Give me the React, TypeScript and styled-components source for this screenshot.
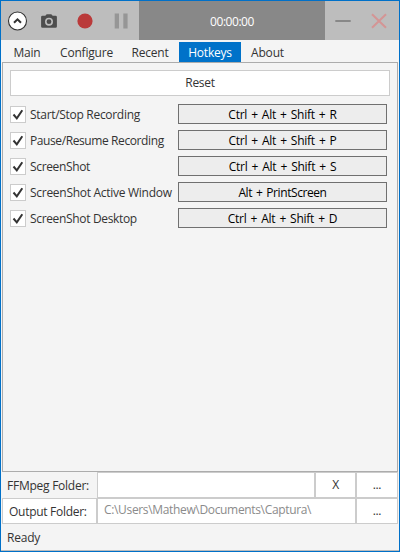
import React from "react";
import styled, { createGlobalStyle } from "styled-components";

const GlobalStyle = createGlobalStyle`
  * { box-sizing: border-box; }
  body { margin: 0; }
`;

const Window = styled.div`
  width: 400px;
  height: 552px;
  display: flex;
  flex-direction: column;
  border: 1px solid #0070c8;
  background: #f4f4f4;
  color: #333;
  font: 12px/16px "Open Sans", "Noto Sans", sans-serif;
  overflow: hidden;
`;

const Frame = styled.div`
  flex: 1;
  min-height: 0;
  display: flex;
  flex-direction: column;
  padding: 0 1px;
  border-bottom: 1px solid #bcbcbc;
`;

const TitleBar = styled.header`
  height: 39px;
  flex: none;
  display: flex;
  background: #bdbdbd;
  margin: 0 -1px;
  padding-left: 1px;
`;

const Tools = styled.div`
  width: 137px;
  svg { display: block; }
`;

const Timer = styled.div`
  width: 186px;
  display: flex;
  align-items: center;
  justify-content: center;
  padding: 2px 0 0 0;
  background: #888;
  color: #fff;
`;

const WindowButtons = styled.div`
  flex: 1;
  svg { display: block; }
`;

const Label = styled.span<{ $spacing?: number; $word?: number }>`
  white-space: pre;
  letter-spacing: ${(p) => p.$spacing ?? -0.2}px;
  word-spacing: ${(p) => p.$word ?? 0}px;
`;

const Tabs = styled.nav`
  height: 22px;
  flex: none;
  display: flex;
  padding-top: 2px;
`;

const Tab = styled.div<{ $width: number; $active?: boolean }>`
  width: ${(p) => p.$width}px;
  display: flex;
  justify-content: center;
  padding-top: 3px;
  background: ${(p) => (p.$active ? "#0072c9" : "transparent")};
  color: ${(p) => (p.$active ? "#fff" : "#333")};
`;

const Panel = styled.main`
  height: 410px;
  flex: none;
  padding: 7px 7px 0;
  border: 1px solid #acacac;
`;

const ResetButton = styled.div`
  height: 26px;
  width: 380px;
  display: flex;
  align-items: center;
  justify-content: center;
  border: 1px solid #ccc;
  background: #fff;
`;

const HotkeyList = styled.div`
  display: flex;
  flex-direction: column;
  gap: 6px;
  padding-top: 8px;
`;

const HotkeyRow = styled.div`
  height: 20px;
  display: flex;
  align-items: center;
`;

const CheckBox = styled.div`
  width: 16px;
  height: 17px;
  margin: 1px 4px 0 0;
  border: 1px solid #ccc;
  background: #fff;
  svg { display: block; }
`;

const HotkeyName = styled.div`
  width: 148px;
  padding-top: 2px;
  display: flex;
`;

const HotkeyButton = styled.div`
  width: 209px;
  height: 20px;
  display: flex;
  align-items: center;
  justify-content: center;
  padding-top: 1px;
  border: 1px solid #707070;
  background: #ededed;
  color: #000;
`;

const FolderRow = styled.div`
  height: 26px;
  flex: none;
  display: flex;
`;

const FolderLabel = styled.div<{ $boxed?: boolean }>`
  width: 95px;
  display: flex;
  align-items: center;
  padding: ${(p) => (p.$boxed ? "1px 0 0 6px" : "2px 0 0 4px")};
  border: 1px solid ${(p) => (p.$boxed ? "#ccc" : "transparent")};
  background: ${(p) => (p.$boxed ? "#fff" : "transparent")};
`;

const PathField = styled.div`
  flex: 1;
  display: flex;
  align-items: center;
  padding: 0 0 3px 6px;
  border: 1px solid #ccc;
  background: #fff;
  color: #8b8b8b;
`;

const SmallButton = styled.div<{ $width: number }>`
  width: ${(p) => p.$width}px;
  display: flex;
  align-items: center;
  justify-content: center;
  border: 1px solid #ccc;
  background: #fff;
`;

const Status = styled.footer`
  flex: 1;
  display: flex;
  align-items: center;
  padding: 1px 0 0 5px;
`;

const tabs = [
  { name: "Main", width: 50 },
  { name: "Configure", width: 69 },
  { name: "Recent", width: 58 },
  { name: "Hotkeys", width: 62, active: true },
  { name: "About", width: 53 },
];

const hotkeys = [
  { name: "Start/Stop Recording", spacing: -0.3, keys: "Ctrl + Alt + Shift + R", keySpacing: -0.25 },
  { name: "Pause/Resume Recording", spacing: -0.4, keys: "Ctrl + Alt + Shift + P", keySpacing: -0.25 },
  { name: "ScreenShot", spacing: -0.35, keys: "Ctrl + Alt + Shift + S", keySpacing: -0.25 },
  { name: "ScreenShot Active Window", spacing: -0.28, keys: "Alt + PrintScreen", keySpacing: -0.42 },
  { name: "ScreenShot Desktop", spacing: -0.34, keys: "Ctrl + Alt + Shift + D", keySpacing: -0.25 },
];

export default function App() {
  return (
    <>
      <GlobalStyle />
      <Window>
        <Frame>
          <TitleBar>
            <Tools>
              <svg width="137" height="39" viewBox="2 1 137 39">
                <circle cx="17.5" cy="21" r="9" fill="#fff" stroke="#333" strokeWidth="1.1" />
                <path d="M14 22.8l3.5-3.5 3.5 3.5" fill="none" stroke="#333" strokeWidth="2" />
                <path
                  d="M42.5 15.7h2.8l1.4-1.5h4.6l1.4 1.5h2.8q1.4 0 1.4 1.4v9.3q0 1.4-1.4 1.4h-13q-1.4 0-1.4-1.4v-9.3q0-1.4 1.4-1.4z"
                  fill="#4d4d4d"
                />
                <circle cx="49" cy="21.7" r="3.2" fill="#4d4d4d" stroke="#bdbdbd" strokeWidth="1.6" />
                <circle cx="85" cy="21" r="7.6" fill="#ba3a3a" />
                <path d="M114.7 13.5h4.3v15h-4.3zM123.3 13.5h4.3v15h-4.3z" fill="#969696" />
              </svg>
            </Tools>
            <Timer><Label $spacing={-0.45}>00:00:00</Label></Timer>
            <WindowButtons>
              <svg width="74" height="39" viewBox="325 1 74 39">
                <path d="M335.3 21h15.4" stroke="#888" strokeWidth="2" />
                <path d="M372 14.2l14 13.6M386 14.2l-14 13.6" stroke="#d49595" strokeWidth="2" />
              </svg>
            </WindowButtons>
          </TitleBar>
          <Tabs>
            {tabs.map((t) => (
              <Tab key={t.name} $width={t.width} $active={t.active}>
                <Label>{t.name}</Label>
              </Tab>
            ))}
          </Tabs>
          <Panel>
            <ResetButton><Label $spacing={-0.3}>Reset</Label></ResetButton>
            <HotkeyList>
              {hotkeys.map((h) => (
                <HotkeyRow key={h.name}>
                  <CheckBox>
                    <svg width="14" height="15" viewBox="0 0 14 15">
                      <path d="M2.5 7.5l3.3 3.8 5.5-8" fill="none" stroke="#333" strokeWidth="2" />
                    </svg>
                  </CheckBox>
                  <HotkeyName><Label $spacing={h.spacing}>{h.name}</Label></HotkeyName>
                  <HotkeyButton><Label $spacing={h.keySpacing} $word={1.2}>{h.keys}</Label></HotkeyButton>
                </HotkeyRow>
              ))}
            </HotkeyList>
          </Panel>
          <FolderRow>
            <FolderLabel><Label $spacing={-0.25}>FFMpeg Folder:</Label></FolderLabel>
            <PathField />
            <SmallButton $width={41}><Label>X</Label></SmallButton>
            <SmallButton $width={42}><Label $spacing={-0.4}>...</Label></SmallButton>
          </FolderRow>
          <FolderRow>
            <FolderLabel $boxed><Label $spacing={-0.28}>Output Folder:</Label></FolderLabel>
            <PathField><Label $spacing={-0.34}>C:\Users\Mathew\Documents\Captura\</Label></PathField>
            <SmallButton $width={42}><Label $spacing={-0.4}>...</Label></SmallButton>
          </FolderRow>
          <Status><Label>Ready</Label></Status>
        </Frame>
      </Window>
    </>
  );
}
